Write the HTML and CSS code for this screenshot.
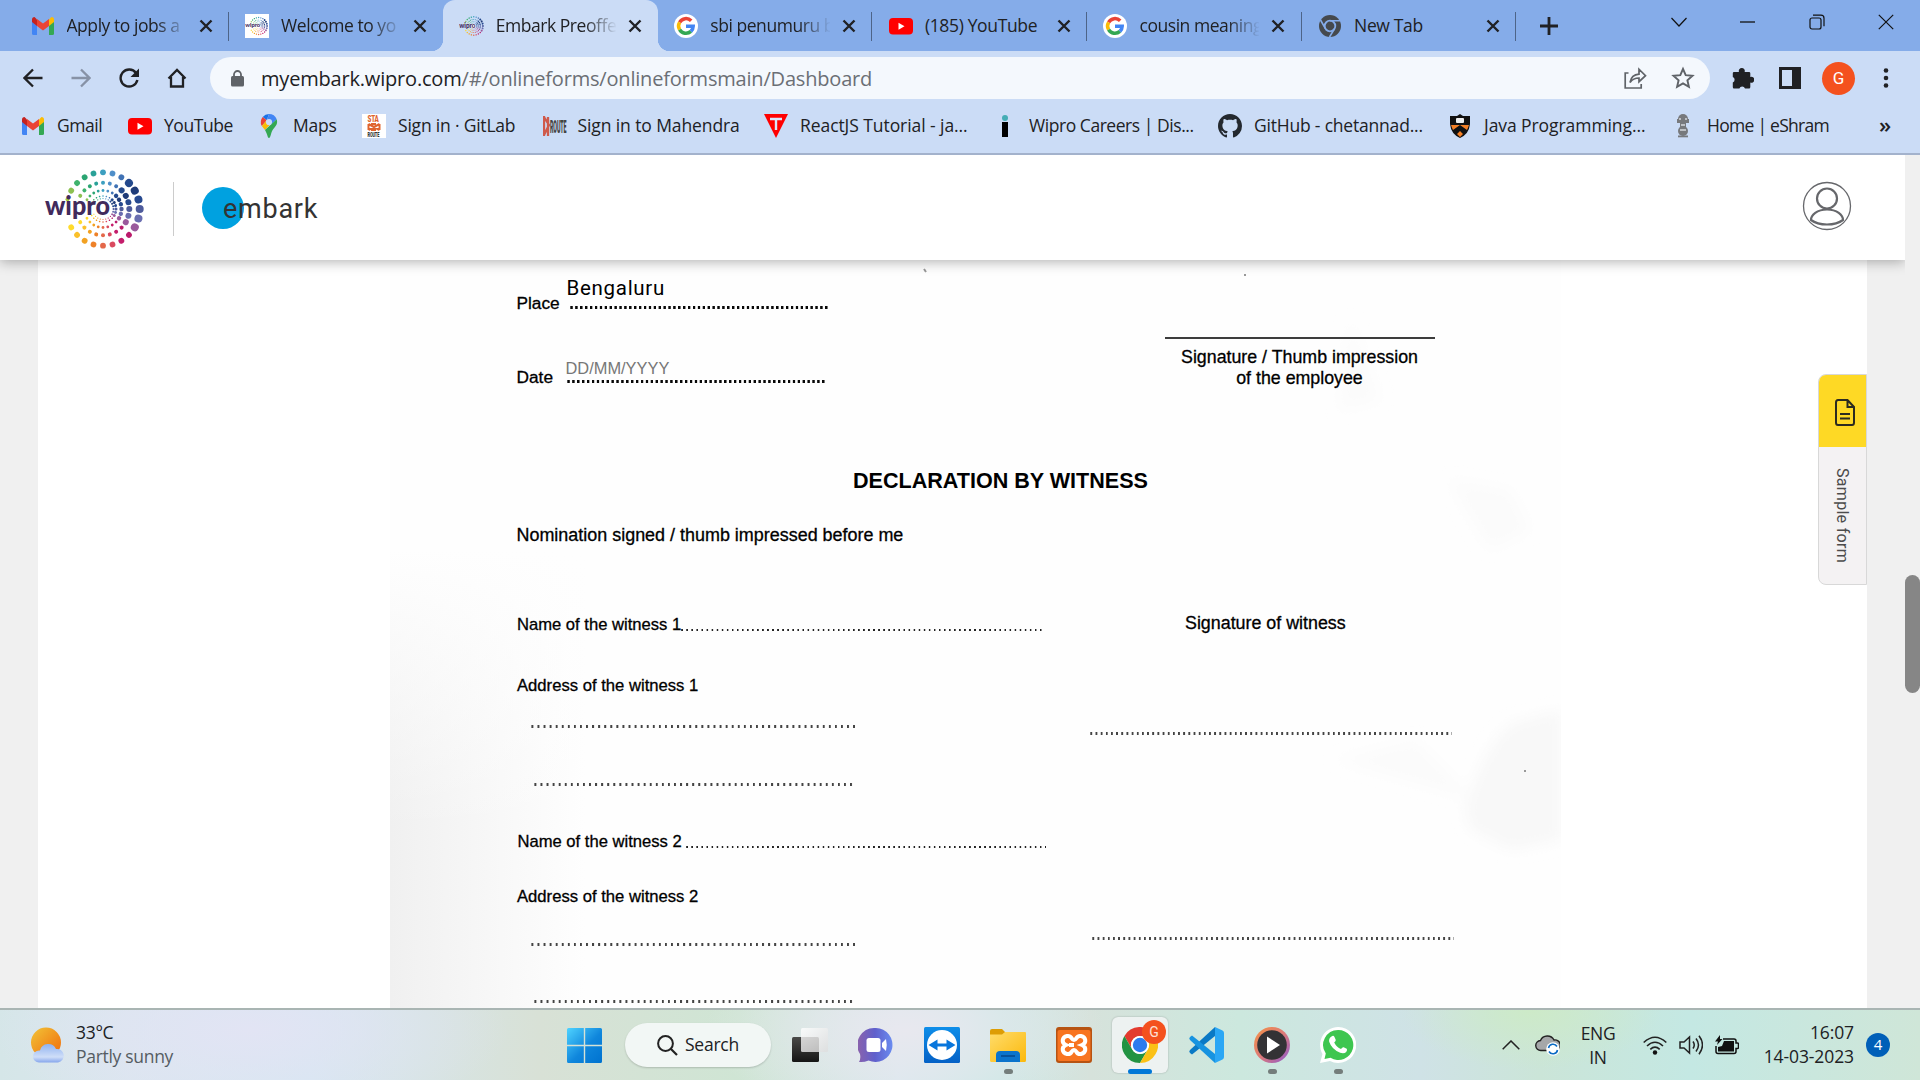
FILE: index.html
```html
<!DOCTYPE html>
<html lang="en">
<head>
<meta charset="utf-8">
<title>Embark Preoffer</title>
<link rel="stylesheet" href="styles.css">
</head>
<body>
<svg class="defs" width="0" height="0" aria-hidden="true">
  <defs>
    <symbol id="gmail" viewBox="0 0 24 24">
      <path fill="#4285f4" d="M1 6.500V19.500Q1 21 2.500 21H6V10z"/>
      <path fill="#34a853" d="M23 6.500V19.500Q23 21 21.500 21H18V10z"/>
      <path fill="#fbbc04" d="M18 5.500V12L23 8V5.500Q23 3 20.500 3Z"/>
      <path fill="#c5221f" d="M6 5.500V12L1 8V5.500Q1 3 3.500 3Z"/>
      <path fill="#ea4335" d="M6 12V5l6 4.600L18 5v7l-6 4.600z"/>
    </symbol>
    <symbol id="google" viewBox="0 0 24 24">
      <circle cx="12" cy="12" r="12" fill="#fff"/>
      <path fill="none" stroke="#ea4335" stroke-width="3.500" d="M5.600 8.300A7.300 7.300 0 0 1 17.200 6.800"/>
      <path fill="none" stroke="#fbbc05" stroke-width="3.500" d="M5.600 8.300a7.300 7.300 0 0 0 0 7.400"/>
      <path fill="none" stroke="#34a853" stroke-width="3.500" d="M5.600 15.700a7.300 7.300 0 0 0 11.300 1.700"/>
      <path fill="none" stroke="#4285f4" stroke-width="3.500" d="M16.900 17.400A7.300 7.300 0 0 0 19.200 12.200H12"/>
    </symbol>
    <symbol id="youtube" viewBox="0 0 24 24">
      <rect y="4" width="24" height="16.500" rx="4" fill="#f00"/><path fill="#fff" d="M9.500 8.700v7l6-3.500z"/>
    </symbol>
    <symbol id="close" viewBox="0 0 14 14"><path d="M1.500 1.500l11 11M12.500 1.500l-11 11" stroke="#202124" stroke-width="2.400" fill="none"/></symbol>
    <g id="ray"><circle cy="-36.700" r="2.900"/><circle cy="-26.300" r="2"/><circle cy="-18.500" r="1.400"/><circle cy="-13" r=".8"/><circle cy="-10.500" r=".6"/></g>
    <g id="raybig"><circle cy="-36.700" r="4"/><circle cy="-26.300" r="3"/><circle cy="-18.500" r="2.200"/><circle cy="-13" r="1.500"/><circle cy="-10.500" r="1"/></g>
    <symbol id="wipro" viewBox="0 0 104 84">
      <g transform="translate(59 42)">
        <use href="#ray" fill="#3c9fc0"/>
        <use href="#ray" fill="#4f8fc9" transform="rotate(15)"/>
        <use href="#ray" fill="#4173b5" transform="rotate(30)"/>
        <use href="#raybig" fill="#24498c" transform="rotate(45)"/>
        <use href="#raybig" fill="#1f3b78" transform="rotate(60)"/>
        <use href="#raybig" fill="#27498f" transform="rotate(75)"/>
        <use href="#raybig" fill="#4d5a9b" transform="rotate(90)"/>
        <use href="#raybig" fill="#6a6eb0" transform="rotate(105)"/>
        <use href="#raybig" fill="#9a5a9c" transform="rotate(120)"/>
        <use href="#ray" fill="#bb1b6c" transform="rotate(135)"/>
        <use href="#ray" fill="#c41d6b" transform="rotate(150)"/>
        <use href="#ray" fill="#da4a5f" transform="rotate(165)"/>
        <use href="#ray" fill="#e4684a" transform="rotate(180)"/>
        <use href="#ray" fill="#ee8128" transform="rotate(195)"/>
        <use href="#ray" fill="#f2a122" transform="rotate(210)"/>
        <use href="#ray" fill="#fac02a" transform="rotate(225)"/>
        <use href="#ray" fill="#ffdb2c" transform="rotate(240)"/>
        <circle cx="-35.500" cy="-9.800" r="2" fill="#a6ce39"/>
        <use href="#ray" fill="#8cc152" transform="rotate(300)"/>
        <use href="#ray" fill="#3fb36c" transform="rotate(315)"/>
        <use href="#ray" fill="#2ba572" transform="rotate(330)"/>
        <use href="#ray" fill="#2aa198" transform="rotate(345)"/>
        <circle cx="0" cy="0" r="9" fill="#fff"/>
      </g>
      <text x="1" y="48" textLength="65" lengthAdjust="spacingAndGlyphs" font-family="Lato, sans-serif" font-weight="900" font-size="27" fill="#412a5c">wipro</text>
    </symbol>
    <symbol id="chrome" viewBox="0 0 36 36">
      <path fill="#e33b2e" d="M2.400 9A18 18 0 0 1 33.600 9H18a9 9 0 0 0-7.800 13.500z"/>
      <path fill="#229342" d="M2.400 9A18 18 0 0 0 18 36l7.800-13.500A9 9 0 0 1 10.200 22.500z"/>
      <path fill="#fbc116" d="M33.600 9A18 18 0 0 1 18 36l7.800-13.500A9 9 0 0 0 18 9z"/>
      <circle cx="18" cy="18" r="9" fill="#fff"/><circle cx="18" cy="18" r="7.200" fill="#2d7bee"/>
    </symbol>
    <linearGradient id="win" x1="0" y1="0" x2="1" y2="1"><stop offset="0" stop-color="#4fd3ff"/><stop offset=".55" stop-color="#0f86dc"/><stop offset="1" stop-color="#0072cf"/></linearGradient>
    <linearGradient id="sun" x1="0" y1="0" x2="1" y2="1"><stop offset="0" stop-color="#f2c437"/><stop offset="1" stop-color="#f0690a"/></linearGradient>
    <linearGradient id="cloud" x1="0" y1="0" x2="0" y2="1"><stop offset="0" stop-color="#8fb2f0"/><stop offset=".7" stop-color="#cfdef8"/><stop offset="1" stop-color="#86a6ec"/></linearGradient>
    <linearGradient id="dark" x1="0" y1="0" x2="0" y2="1"><stop offset="0" stop-color="#4a4a48"/><stop offset="1" stop-color="#151515"/></linearGradient>
    <linearGradient id="glass" x1="0" y1="0" x2="1" y2="1"><stop offset="0" stop-color="#fff"/><stop offset="1" stop-color="#ddd"/></linearGradient>
    <linearGradient id="chat" x1="0" y1="0" x2="1" y2="0"><stop offset="0" stop-color="#8a62ac"/><stop offset=".5" stop-color="#6060cc"/><stop offset="1" stop-color="#6a8cf0"/></linearGradient>
    <linearGradient id="tv" x1="0" y1="0" x2="0" y2="1"><stop offset="0" stop-color="#0e8ee9"/><stop offset="1" stop-color="#0561c6"/></linearGradient>
    <linearGradient id="folder" x1="0" y1="0" x2="1" y2="1"><stop offset="0" stop-color="#ffdc6b"/><stop offset="1" stop-color="#fbb90c"/></linearGradient>
    <linearGradient id="media" x1="0" y1="0" x2="1" y2="1"><stop offset="0" stop-color="#f59244"/><stop offset=".5" stop-color="#dd7a78"/><stop offset="1" stop-color="#8b58d0"/></linearGradient>
  </defs>
</svg>

<header class="tabstrip">
  <div class="tab"><svg class="fav"><use href="#gmail"/></svg><span class="title">Apply to jobs a</span><svg class="x"><use href="#close"/></svg></div>
  <div class="tab before-active"><span class="fav wip box"><svg width="24" height="22"><use href="#wipro"/></svg></span><span class="title">Welcome to yo</span><svg class="x"><use href="#close"/></svg></div>
  <div class="tab active"><span class="fav wip"><svg width="26" height="24"><use href="#wipro"/></svg></span><span class="title">Embark Preoffe</span><svg class="x"><use href="#close"/></svg></div>
  <div class="tab"><svg class="fav"><use href="#google"/></svg><span class="title">sbi penumuru b</span><svg class="x"><use href="#close"/></svg></div>
  <div class="tab"><svg class="fav"><use href="#youtube"/></svg><span class="title full">(185) YouTube</span><svg class="x"><use href="#close"/></svg></div>
  <div class="tab"><svg class="fav"><use href="#google"/></svg><span class="title">cousin meaning</span><svg class="x"><use href="#close"/></svg></div>
  <div class="tab">
    <svg class="fav" viewBox="0 0 24 24"><circle cx="12" cy="12" r="11" fill="#45494d"/><circle cx="12" cy="12" r="5.300" fill="none" stroke="#85ace9" stroke-width="1.800"/><path d="M12 6.700H22M7.400 14.600L2.500 6M16.600 14.600L11.500 23" stroke="#85ace9" stroke-width="1.600"/></svg>
    <span class="title full">New Tab</span><svg class="x"><use href="#close"/></svg></div>
  <svg class="plus" viewBox="0 0 18 18"><path d="M9 0v18M0 9h18" stroke="#202124" stroke-width="2.800"/></svg>
  <div class="winctl">
    <svg width="16" height="10"><path d="M.5 1l7.500 8 7.500-8" fill="none" stroke="#111" stroke-width="1.200"/></svg>
    <svg width="16" height="10"><path d="M0 5h15" stroke="#111" stroke-width="1.300"/></svg>
    <svg width="16" height="16"><g fill="none" stroke="#111" stroke-width="1.200"><rect x="1" y="4" width="11" height="11" rx="2"/><path d="M4 1.200h8q3 0 3 3v8"/></g></svg>
    <svg width="16" height="16"><path d="M.8.800l14.400 14.400M15.200.800L.8 15.200" stroke="#111" stroke-width="1.200"/></svg>
  </div>
</header>

<nav class="toolbar">
  <svg width="20" height="20" viewBox="0 0 20 20"><path d="M19.500 10H1.500M10 1.500L1.500 10l8.500 8.500" fill="none" stroke="#202124" stroke-width="2.300"/></svg>
  <svg width="20" height="20" viewBox="0 0 20 20"><path d="M.5 10h18M10 1.500l8.500 8.500-8.500 8.500" fill="none" stroke="#8792a6" stroke-width="2.300"/></svg>
  <svg width="20" height="20" viewBox="0 0 20 20"><path d="M17 5A8.500 8.500 0 1 0 18.400 12" fill="none" stroke="#202124" stroke-width="2.400"/><path d="M20 .5v8.500h-8.500z" fill="#202124"/></svg>
  <svg width="20" height="20" viewBox="0 0 20 20"><path d="M1.500 10.500L10 2l8.500 8.500M4 9v9.500h12V9" fill="none" stroke="#202124" stroke-width="2.300"/></svg>
  <div class="omnibox">
    <svg width="13" height="17" viewBox="0 0 13 17"><rect y="6" width="13" height="10.500" rx="1.500" fill="#5f6368"/><path d="M3 7V4.500a3.500 3.500 0 0 1 7 0V7" fill="none" stroke="#5f6368" stroke-width="1.800"/></svg>
    <span class="url">myembark.wipro.com<span class="path">/#/onlineforms/onlineformsmain/Dashboard</span></span>
    <svg width="23" height="22" viewBox="0 0 23 22"><path d="M4.500 6H1.200v15h16v-4M6 15.500C7 10 10 7.500 15 7.200V2.200l6.500 6.500-6.500 6V11C11 11 8.500 12 6 15.500z" fill="none" stroke="#5f6368" stroke-width="1.700"/></svg>
    <svg width="24" height="24" viewBox="0 0 24 24"><path d="M12 3l2.700 6.200 6.800.600-5.100 4.500 1.500 6.600L12 17.400l-5.900 3.500 1.500-6.600-5.100-4.500 6.800-.600z" fill="none" stroke="#5f6368" stroke-width="1.900"/></svg>
  </div>
  <svg width="22" height="22" viewBox="0 0 22 22"><path d="M2 5h5a3 3 0 1 1 5.600 0H17q1.300 0 1.300 1.300V10a3 3 0 1 1 0 5.600V20q0 1.500-1.300 1.500H13a3 3 0 0 0-5.600 0H2Q.8 21.500.8 20v-4.500a3 3 0 0 0 0-5.500V6.300Q.8 5 2 5z" fill="#202124"/></svg>
  <svg width="22" height="22" viewBox="0 0 22 22"><path d="M0 0h22v22H0zM3 3v16h10V3z" fill="#202124" fill-rule="evenodd"/></svg>
  <span class="avatar">G</span>
  <svg width="6" height="20" viewBox="0 0 6 20"><g fill="#202124"><circle cx="3" cy="2.500" r="2.300"/><circle cx="3" cy="10" r="2.300"/><circle cx="3" cy="17.500" r="2.300"/></g></svg>
</nav>

<nav class="bookmarks">
  <span class="bm tight"><svg><use href="#gmail"/></svg><span>Gmail</span></span>
  <span class="bm tight"><svg><use href="#youtube"/></svg><span>YouTube</span></span>
  <span class="bm"><svg viewBox="0 0 24 24"><path d="M12 0a8.300 8.300 0 0 0-6.300 2.900L9.800 6.300z" fill="#1a73e8"/><path d="M5.700 2.900A8.300 8.300 0 0 0 4.800 12L9.800 6.300z" fill="#ea4335"/><path d="M12 0a8.300 8.300 0 0 1 7.700 5.200L14.300 10.500 9.800 6.300z" fill="#4285f4"/><path d="M9.800 6.300L4.800 12 8 16l6.300-7z" fill="#fbbc04"/><path d="M19.700 5.200c1.800 5.500-2.500 8-4.500 11.500-1.200 2.300-1.700 7.300-3.200 7.300s-1.300-3.500-4-8z" fill="#34a853"/><circle cx="12" cy="8" r="3.100" fill="#cbdcf6"/></svg><span>Maps</span></span>
  <span class="bm"><svg viewBox="0 0 24 24"><rect width="24" height="24" fill="#fff"/><g font-family="Roboto" font-weight="900" font-size="5"><text transform="translate(5.500 8) scale(1.250 1.700)" fill="#e0642d">STA</text><text transform="translate(5.500 22.800) scale(.78 1.400)" fill="#333">ROUTE</text></g><path d="M6.500 10l11 6M17.500 10l-11 6M6.500 10v6M17.500 10v6M9 10h5M9 16h5" stroke="#e0642d" stroke-width="2"/></svg><span>Sign in · GitLab</span></span>
  <span class="bm mah"><svg viewBox="0 0 24 24"><path d="M1 2v20M5 3v19M1 3l5 8-5 10" stroke="#cf5a4b" stroke-width="2.300" fill="none"/><text transform="translate(7 19) scale(1 3.300)" font-family="Roboto" font-weight="900" font-size="5.300" fill="#444">ROUTE</text></svg><span>Sign in to Mahendra</span></span>
  <span class="bm loose"><svg viewBox="0 0 24 24"><path d="M0 0h24L12 24z" fill="#f00"/><path d="M6 5h12M12 4v12" stroke="#dbe6fa" stroke-width="2.400"/></svg><span>ReactJS Tutorial - ja...</span></span>
  <span class="bm tight"><svg viewBox="0 0 24 24"><circle cx="12" cy="4" r="3" fill="#45adb5"/><path d="M9 8h6v15H9z" fill="#000"/></svg><span>Wipro Careers | Dis...</span></span>
  <span class="bm"><svg viewBox="0 0 16 16"><path fill="#24292f" d="M8 0C3.580 0 0 3.580 0 8c0 3.540 2.290 6.530 5.470 7.590.4.070.55-.17.55-.38 0-.19-.01-.82-.01-1.490-2.010.37-2.530-.49-2.690-.94-.09-.23-.48-.94-.82-1.130-.28-.15-.68-.52-.01-.53.63-.01 1.080.58 1.230.82.720 1.210 1.870.87 2.330.66.070-.52.280-.87.510-1.070-1.780-.2-3.640-.89-3.640-3.950 0-.87.310-1.590.82-2.150-.08-.2-.36-1.020.08-2.120 0 0 .67-.21 2.200.82.640-.18 1.320-.27 2-.27s1.360.09 2 .27c1.530-1.040 2.200-.82 2.200-.82.440 1.100.160 1.920.080 2.120.51.560.82 1.270.82 2.150 0 3.070-1.870 3.750-3.650 3.950.29.250.54.730.54 1.480 0 1.070-.01 1.930-.01 2.200 0 .21.15.46.55.38A8.010 8.010 0 0 0 16 8c0-4.420-3.580-8-8-8z"/></svg><span>GitHub - chetannad...</span></span>
  <span class="bm loose"><svg viewBox="0 0 24 24"><path d="M2 2h7l3-2 3 2h7v8q-1 10-10 14Q3 20 2 10z" fill="#111"/><path d="M3 11h18q-1 3-2 5l-7-5-7 5q-1-2-2-5zM9 20l3-3 3 3-3 3z" fill="#f58025"/><rect x="8" y="4" width="8" height="5" rx="1" fill="#eee"/></svg><span>Java Programming...</span></span>
  <span class="bm tighter"><svg viewBox="0 0 24 24"><g fill="#77797c"><circle cx="12" cy="5" r="5"/><path d="M6 5h12v4H6z"/><rect x="9" y="8" width="6" height="6"/><circle cx="12" cy="17" r="5"/><rect x="7" y="21.500" width="10" height="1.800"/></g><path d="M8 5h2M14 5h2M9 16h6M10 11h4" stroke="#d5d8dc" stroke-width="1.300"/></svg><span>Home | eShram</span></span>
  <span class="more">»</span>
</nav>

<div class="viewport">
  <div class="page">
    <header class="site">
      <svg class="logo"><use href="#wipro"/></svg>
      <i class="rule"></i>
      <span class="embark"><svg width="42" height="42"><circle cx="21" cy="21" r="21" fill="#00a1e0"/></svg><b>embark</b></span>
      <svg class="user" viewBox="0 0 50 50"><g fill="none" stroke="#66676b" stroke-width="2.200"><circle cx="25" cy="25" r="23.500" stroke-width="1.300"/><circle cx="25" cy="17.500" r="10"/><path d="M9 39c0-5 6-10.500 16-10.500S41 34 41 39q-6 4.500-16 4.500T9 39z"/></g></svg>
    </header>
    <main class="sheet">
      <div class="scan">
        <svg class="smudge" viewBox="0 0 1171 748"><defs><filter id="soft" x="-20%" y="-20%" width="140%" height="140%"><feGaussianBlur stdDeviation="7"/></filter></defs>
          <g filter="url(#soft)"><path d="M1075 550q20-70 50-88l46-12v130l-50 10-40-20z" fill="#f8f8f8"/><path d="M1060 220l60 10 20 40-40 20-30-50zM960 60l30 80-40 10zM945 500l80-20 60 60z" fill="#fbfbfb"/></g>
          <path d="M534 9l2 3M1134 511h2M854 15h2" stroke="#999" stroke-width="2"/>
        </svg>
        <section class="sign">
          <div class="fields">
            <div class="field"><label>Place</label><span class="line heavy"><span class="value">Bengaluru</span></span></div>
            <div class="field date"><label>Date</label><span class="line heavy"><span class="value hint">DD/MM/YYYY</span></span></div>
          </div>
          <div class="thumb">Signature / Thumb impression<br>of the employee</div>
        </section>
        <h2>DECLARATION BY WITNESS</h2>
        <p class="nomination">Nomination signed / thumb impressed before me</p>
        <section class="witness">
          <div class="details">
            <div class="name">Name of the witness 1<i class="line fine"></i></div>
            <div class="addr">Address of the witness 1</div>
            <i class="line soft a"></i><i class="line soft b"></i>
            <div class="name second">Name of the witness 2<i class="line fine"></i></div>
            <div class="addr">Address of the witness 2</div>
            <i class="line soft a"></i><i class="line soft b"></i>
          </div>
          <div class="marks">
            <div class="cap">Signature of witness</div>
            <i class="line soft m1"></i><i class="line soft m2"></i>
          </div>
        </section>
      </div>
    </main>
    <aside class="sample">
      <div class="doc"><svg width="20" height="27" viewBox="0 0 20 27"><path d="M3 1h9.500L19 8v15.500q0 2.500-2 2.500H3q-2 0-2-2.500v-20Q1 1 3 1zM12.500 1v7H19M5 15h10M5 19.500h10" fill="none" stroke="#2b2b20" stroke-width="2"/></svg></div>
      <div class="lbl">Sample form</div>
    </aside>
  </div>
  <div class="scrollbar"><i></i></div>
</div>

<footer class="taskbar">
  <div class="weather">
    <svg width="34" height="36" viewBox="0 0 34 36"><circle cx="15" cy="15.500" r="15" fill="url(#sun)"/><path d="M8 35.500a6 6 0 0 1 0-12h1a8.500 8.500 0 0 1 16-1.500 6.700 6.700 0 0 1 2 13.500z" fill="url(#cloud)"/></svg>
    <div>33°C<br><span>Partly sunny</span></div>
  </div>
  <svg class="start" viewBox="0 0 35 35"><path d="M0 1.500Q0 0 1.500 0H16.800V16.800H0zM18.200 0h15.300Q35 0 35 1.500v15.300H18.200zM0 18.200h16.800V35H1.500Q0 35 0 33.500zM18.200 18.200H35v15.300q0 1.500-1.500 1.500H18.200z" fill="url(#win)"/></svg>
  <div class="search"><svg width="21" height="21" viewBox="0 0 21 21"><circle cx="8.500" cy="8.500" r="7.400" fill="none" stroke="#222" stroke-width="2"/><path d="M14 14l6 6" stroke="#222" stroke-width="2.200"/></svg><span>Search</span></div>
  <div class="apps">
    <div class="app"><svg viewBox="0 0 36 36"><rect y="10" width="27" height="25" rx="1.500" fill="url(#dark)"/><rect x="9" y="1" width="27" height="24" rx="1.500" fill="url(#glass)" opacity=".8"/></svg></div>
    <div class="app"><svg viewBox="0 0 36 36"><path d="M18 1a17 17 0 1 1-7.500 32.500Q6 35.500 1 35q2-3 1-8A17 17 0 0 1 18 1z" fill="url(#chat)"/><rect x="8.500" y="11" width="14" height="14" rx="2.500" fill="#fff"/><path d="M24 16l4-4q1.500 6 0 12l-4-4z" fill="#fff"/></svg></div>
    <div class="app"><svg viewBox="0 0 36 36"><rect width="36" height="36" rx="1.500" fill="url(#tv)"/><circle cx="18" cy="18" r="15" fill="#fff"/><path d="M4.500 18l9-5.500v4h9v-4l9 5.500-9 5.500v-4h-9v4z" fill="#0876dc"/></svg></div>
    <div class="app run"><svg viewBox="0 0 36 36"><path d="M0 4q0-2 2-2h10l3 3v5H0z" fill="#dd9d05"/><path d="M0 7.500h12l3-2.500h20q1 0 1 1v27.500q0 1.500-1.500 1.500H1.500Q0 35 0 33.500z" fill="url(#folder)"/><path d="M6 35v-7q0-4 4-4h16q4 0 4 4v7z" fill="#0b74cc"/><path d="M11 29h14" stroke="#064f96" stroke-width="1.800"/></svg></div>
    <div class="app"><svg viewBox="0 0 36 36"><rect width="36" height="36" rx="3" fill="#b75312"/><rect x="1.500" y="3" width="33" height="31" rx="2" fill="#f87420"/><path d="M11 9c5-1 4 4 7 4s2-5 7-4 6 7 1 9c5 2 4 8-1 9s-4-4-7-4-2 5-7 4-6-7-1-9c-5-2-4-8 1-9z" fill="none" stroke="#fff" stroke-width="4"/><path d="M13 18h5" stroke="#fff" stroke-width="4"/></svg></div>
    <div class="app current"><svg><use href="#chrome"/></svg><span class="badge">G</span></div>
    <div class="app"><svg viewBox="0 0 36 36"><path d="M27 0L2 23q-1.500 1.500 0 3l2 1.500L27 9z" fill="#0a79c5"/><path d="M27 36L2 13q-1.500-1.500 0-3l2-1.500L27 27z" fill="#1793e0"/><path d="M27 0l7.500 3.500Q36 4.300 36 6v24q0 1.700-1.500 2.500L27 36z" fill="#2ba7f5"/></svg></div>
    <div class="app run"><svg viewBox="0 0 36 36"><circle cx="18" cy="18" r="18" fill="url(#media)"/><circle cx="18" cy="18" r="14.800" fill="#333235"/><path d="M13 9.500l13 8.500-13 8.500z" fill="#fff"/></svg></div>
    <div class="app run"><svg viewBox="0 0 36 36"><path d="M18 0a18 18 0 1 1-8 34L0 36l2.500-9A18 18 0 0 1 18 0z" fill="#fff"/><path d="M18 3a15 15 0 1 1-7.500 27.800L4.500 32l1.300-5.500A15 15 0 0 1 18 3z" fill="#3ec650"/><path d="M11.500 9.500q2-1.500 3 .5l1.300 3q0 1.200-1.600 2.500 2.300 4.700 6.800 6.500 1.500-2.200 2.700-1.800l3 1.500q1 1-.5 3.300-2 2-6 .800-8.500-3.300-11-11-.7-3.500 2.300-5.300z" fill="#fff"/></svg></div>
  </div>
  <div class="tray">
    <svg class="chev" width="18" height="10"><path d="M.7 9.300L9 1l8.300 8.300" fill="none" stroke="#222" stroke-width="1.500"/></svg>
    <svg class="od" width="25" height="22" viewBox="0 0 25 22"><path d="M6 16.500a5 5 0 0 1-.5-10A7.500 7.500 0 0 1 19 6a5 5 0 0 1 2 10.500z" fill="#a5a7a9" stroke="#222" stroke-width="1.400"/><circle cx="18" cy="15" r="6.800" fill="#fff"/><path d="M13.500 14a4.600 4.600 0 0 1 8.500-1.500M22.500 16a4.600 4.600 0 0 1-8.500 1.500" fill="none" stroke="#0b6bc4" stroke-width="1.600"/></svg>
    <div class="lang">ENG<br>IN</div>
    <svg class="wifi" width="24" height="19" viewBox="0 0 24 19"><g fill="none" stroke="#222" stroke-width="1.600"><path d="M.7 6.500q11.300-10.500 22.600 0M4 10q8-7.500 16 0M7.300 13.300q4.700-4.300 9.400 0"/></g><circle cx="12" cy="16.500" r="2.200" fill="#111"/></svg>
    <svg class="snd" width="24" height="20" viewBox="0 0 24 20"><path d="M1 7h4l5.500-5v16L5 13H1zM14 6.500q2.500 3.500 0 7M17 3.500q5 6.500 0 13M20 .8q7 9.200 0 18.400" fill="none" stroke="#222" stroke-width="1.500"/></svg>
    <svg class="bat" width="24" height="20" viewBox="0 0 24 20"><path d="M8 4h11q2 0 2 2v2h1.500q1 0 1 1v3.500q0 1-1 1H21v3q0 2-2 2H3q-2 0-2-2V11" fill="none" stroke="#111" stroke-width="1.500"/><path d="M9 6h10v10.500H3V12l4-1zM5 0L0 6.500h3L2 10l5.500-6H5z" fill="#111"/></svg>
    <div class="clock">16:07<br>14-03-2023</div>
    <span class="count">4</span>
  </div>
</footer>
</body>
</html>
```
FILE: styles.css
```css
* { box-sizing: border-box; }
body { margin: 0; width: 1920px; height: 1080px; overflow: hidden; display: flex; flex-direction: column; font-family: "Open Sans", "Noto Sans", sans-serif; font-size: 17.500px; color: #202124; background: #fff; }
svg { display: block; flex: none; }
.defs { position: absolute; }

/* browser tabs */
.tabstrip { height: 51px; flex: none; display: flex; align-items: center; background: #85ace9; padding-left: 14px; }
.tab { width: 214.600px; height: 51px; flex: none; display: flex; align-items: center; padding-left: 16.500px; position: relative; }
.tab::after { content: ""; position: absolute; right: 0; top: 12px; width: 1px; height: 29px; background: #4d6488; }
.tab.before-active::after, .tab.active::after { display: none; }
.tab.active { background: #cbdcf6; border-radius: 12px 12px 0 0; }
.tab.active::before { content: ""; position: absolute; left: -12px; right: -12px; bottom: 0; height: 12px; background: radial-gradient(circle at 0 0, transparent 12px, #cbdcf6 12.500px) left / 12px 12px no-repeat, radial-gradient(circle at 100% 0, transparent 12px, #cbdcf6 12.500px) right / 12px 12px no-repeat; }
.fav { width: 24px; height: 24px; margin-right: 12px; flex: none; }
.wip { display: flex; align-items: center; justify-content: center; }
.box { background: #fff; }
.title { width: 120px; overflow: hidden; white-space: nowrap; letter-spacing: -.45px; padding-bottom: 1px; -webkit-mask: linear-gradient(90deg, #000 88px, transparent 121px); mask: linear-gradient(90deg, #000 88px, transparent 121px); }
.title.full { -webkit-mask: none; mask: none; letter-spacing: -.35px; }
.x { width: 14px; height: 14px; margin-left: 12px; }
.plus { width: 18px; height: 18px; margin-left: 24px; }
.winctl { margin-left: auto; display: flex; align-items: center; gap: 53px; padding: 0 26px 8px 0; }

/* navigation bar */
.toolbar { height: 54px; flex: none; background: #cbdcf6; display: flex; align-items: center; padding-left: 23px; }
.toolbar > svg { margin-right: 28px; }
.omnibox { width: 1500px; height: 42px; border-radius: 21px; background: #f4f8fd; display: flex; align-items: center; padding: 0 15px 0 21px; margin: 0 22px 0 -5px; gap: 24px; }
.url { flex: 1; margin-left: -7px; font-size: 20px; letter-spacing: -.19px; white-space: nowrap; }
.path { color: #6b6f75; }
.omnibox + svg { margin-right: 25px; }
.omnibox + svg + svg { margin-right: 21px; }
.avatar { width: 33px; height: 33px; border-radius: 50%; background: #f4511e; color: #fff; display: flex; align-items: center; justify-content: center; font: 17px Roboto, sans-serif; margin-right: 28px; }

.bookmarks { height: 50px; flex: none; background: #cbdcf6; border-bottom: 2px solid #a3b2cc; padding: 0 0 6px 21px; display: grid; grid-template-columns: 107px 129px 105px 181px 221px 229px 225px 230px 223px 205px auto; align-items: center; }
.bm { display: flex; align-items: center; gap: 12px; white-space: nowrap; letter-spacing: -.2px; }
.bm > span { margin-top: -2px; }
.bm svg { width: 24px; height: 24px; }
.tight { letter-spacing: -.45px; }
.tighter { letter-spacing: -.72px; }
.loose { letter-spacing: -.07px; }
.mah { gap: 10.500px; letter-spacing: -.1px; }
.more { font-size: 22px; font-weight: 600; padding-left: 3px; padding-bottom: 4px; }

/* site */
.viewport { height: 853px; flex: none; display: flex; overflow: hidden; }
.page { width: 1905px; position: relative; background: #f0f0f0; display: flex; flex-direction: column; overflow: hidden; }
.scrollbar { width: 15px; background: #f0f0f0; padding-top: 420px; }
.scrollbar i { display: block; height: 118px; border-radius: 8px; background: #868686; }
.site { height: 105px; flex: none; background: #fff; box-shadow: 0 2px 12px rgba(0,0,0,.3); position: relative; z-index: 2; display: flex; align-items: center; padding: 0 53px 0 44px; }
.logo { width: 104px; height: 84px; margin-top: 2px; }
.rule { width: 1px; height: 54px; background: #ccc; margin: 2px 28px 0 25px; }
.embark { display: flex; align-items: center; margin-top: 1px; }
.embark b { font: 27px/42px Roboto, sans-serif; letter-spacing: .75px; color: #333; margin-left: -21px; padding-top: 1px; }
.user { width: 50px; height: 50px; margin-left: auto; margin-top: -3px; }
.sheet { width: 1829px; height: 748px; margin-left: 38px; background: #fff; padding-left: 352px; overflow: hidden; }

/* scanned form */
.scan { width: 1171px; height: 748px; position: relative; background: linear-gradient(90deg, #f0f0f0, #f5f5f5 70px, rgba(254,254,254,0) 195px) 0 290px / 210px 458px no-repeat, #fefefe; font: 16.600px/20px "Liberation Sans", Arial, sans-serif; color: #000; -webkit-text-stroke: .3px #000; }
.scan::before { content: ""; position: absolute; left: 0; top: 270px; width: 220px; height: 300px; background: linear-gradient(#fefefe 20px, rgba(254,254,254,0)); }
.smudge { position: absolute; left: 0; top: 0; width: 1171px; height: 748px; }
.scan > section, .scan > h2, .scan > p { position: relative; }
.sign { display: flex; height: 138px; padding-left: 126.500px; font-size: 17.300px; }
.fields { padding-top: 32.500px; width: 648px; }
.field { display: flex; height: 20px; }
.field label { width: 53px; }
.field.date { margin-top: 54px; }
.field.date label { width: 50px; }
.line { display: block; }
.heavy { width: 258px; height: 3px; margin-top: 13px; background: repeating-linear-gradient(90deg, transparent 0, #080808 .7px 2.300px, transparent 3.200px 4.900px); }
.value { display: block; margin: -30px 0 0 -3px; font: 20.500px/24px Roboto, sans-serif; letter-spacing: .7px; -webkit-text-stroke: 0; }
.hint { margin: -22px 0 0 -1px; font: 16.400px/20px "Liberation Sans", sans-serif; color: #777; letter-spacing: 0; }
.thumb { width: 270px; height: 60px; margin-top: 77px; border-top: 2px solid #3d3d3d; padding-top: 8px; text-align: center; font-size: 17.800px; line-height: 21px; }
.scan h2 { margin: 70.500px 0 0; padding-left: 463px; font-size: 21.550px; line-height: 24px; white-space: nowrap; -webkit-text-stroke: 0; }
.nomination { margin: 32px 0 0; padding-left: 126.500px; font-size: 17.950px; line-height: 20px; }
.witness { display: flex; padding-left: 127px; margin-top: 69.500px; }
.details { width: 573px; }
.name, .addr { height: 20px; }
.name { display: flex; white-space: nowrap; padding-top: 1px; }
.name.second { margin: 45px 0 0 .5px; }
.name.second .fine { width: 360px; margin-left: 4px; }
.fine { width: 363px; height: 2px; margin: 13.500px 0 0 0; background: repeating-linear-gradient(90deg, transparent 0, #222 .6px 1.600px, transparent 2.300px 5.050px); }
.addr { margin-top: 41px; padding-top: 1px; font-size: 16.650px; }
.name.second + .addr { margin-top: 35px; }
.soft { height: 3px; background: repeating-linear-gradient(90deg, transparent 0, #444 .8px 1.800px, transparent 2.900px 6.070px); }
.a { width: 324px; margin: 30px 0 0 14px; }
.b { width: 319px; margin: 55px 0 0 17px; }
.name.second + .addr + .a { margin-top: 37px; }
.name.second + .addr + .a + .b { margin-top: 54px; }
.cap { font-size: 17.850px; padding-left: 95px; margin-top: -1px; }
.m1, .m2 { width: 362px; background: repeating-linear-gradient(90deg, transparent 0, #444 .7px 1.700px, transparent 2.700px 5.160px); }
.m1 { margin-top: 99px; }
.m2 { margin: 202px 0 0 2px; }

.sample { position: absolute; z-index: 3; left: 1818px; top: 219px; width: 49px; height: 211px; border: 1px solid #d8d8d8; border-radius: 8px 0 0 8px; overflow: hidden; background: #f4f2f3; display: flex; flex-direction: column; }
.doc { height: 72px; background: #fed925; display: flex; align-items: center; justify-content: center; padding: 3px 0 0 5px; }
.lbl { flex: 1; writing-mode: vertical-rl; text-align: center; line-height: 48px; font-family: Roboto, sans-serif; font-size: 16px; letter-spacing: .3px; color: #4c4c4c; }

/* taskbar */
.taskbar { height: 72px; flex: none; border-top: 2px solid #a9b5b3; display: flex; align-items: center; position: relative; background: radial-gradient(ellipse 260px 90px at 250px 20px, #e2e4f4, transparent), radial-gradient(ellipse 200px 90px at 905px 20px, #e8e8ef, transparent), radial-gradient(ellipse 130px 60px at 1530px 0, #cdeac8, transparent), linear-gradient(90deg, #d5e6e8 0, #dbe6ef 130px, #d6e7f2 310px, #d8e1d6 540px, #cfe5d4 740px, #d9e8ee 900px, #cde8e5 1000px, #d6e2db 1090px, #cce8de 1240px, #cfe2e6 1420px, #cbe5d8 1540px, #c4e8e3 1690px, #cfe6d8 1920px); }
.weather { width: 567px; padding-left: 31px; display: flex; align-items: center; gap: 11px; line-height: 24px; letter-spacing: -.3px; white-space: nowrap; }
.weather div { margin-top: -3px; }
.weather span { color: #555c62; }
.start { width: 35px; height: 35px; }
.search { width: 146px; height: 44px; margin-left: 23px; border-radius: 22px; background: #f2f7f5; box-shadow: 0 1px 2px rgba(0,0,0,.18); display: flex; align-items: center; padding-left: 32px; gap: 7px; letter-spacing: -.25px; }
.search span { margin-top: -2px; }
.apps { display: flex; margin-left: 16px; gap: 10px; }
.app { width: 56px; height: 56px; border-radius: 6px; display: flex; align-items: center; justify-content: center; position: relative; }
.apps .app:first-child { margin-left: -5px; }
.app svg { width: 36px; height: 36px; }
.current { background: #edf2f1; box-shadow: 0 0 2px rgba(0,0,0,.25); }
.run::after, .current::after { content: ""; position: absolute; bottom: -1px; left: 24px; width: 9px; height: 5px; border-radius: 3px; background: #747d7b; }
.current::after { width: 24px; left: 16px; background: #0078d7; }
.badge { position: absolute; left: 30px; top: 3px; width: 24px; height: 24px; border-radius: 50%; background: #f4511e; color: #fde0d5; font: 14px/24px Roboto, sans-serif; text-align: center; }
.tray { display: flex; align-items: center; height: 70px; margin-left: auto; padding-right: 30px; line-height: 24px; letter-spacing: -.3px; }
.chev { margin-right: 1px; }
.od { margin-left: 14px; }
.lang { width: 40px; text-align: center; margin-left: 18px; }
.wifi { margin-left: 25px; }
.snd, .bat { margin-left: 12px; }
.clock { width: 104px; text-align: right; margin: -3px 0 0 11px; letter-spacing: -.1px; }
.count { width: 24px; height: 24px; margin-left: 12px; border-radius: 50%; background: #005fb8; color: #fff; font-size: 15px; line-height: 23px; text-align: center; }
```
